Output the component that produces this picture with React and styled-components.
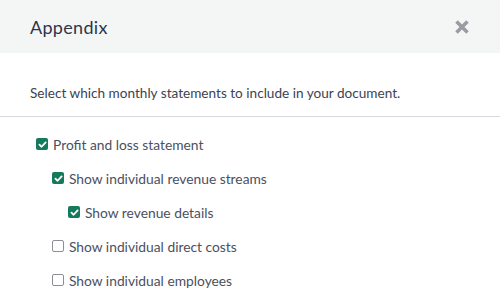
import styled, { createGlobalStyle } from 'styled-components';

const GlobalStyle = createGlobalStyle`
  body {
    margin: 0;
    background: #ffffff;
    font-family: Lato, "Open Sans", sans-serif;
  }
`;

const Dialog = styled.div`
  width: 500px;
  height: 305px;
  overflow: hidden;
  background: #ffffff;
`;

const Header = styled.div`
  height: 53px;
  padding: 0 30px;
  display: flex;
  align-items: center;
  justify-content: space-between;
  background: #f4f6f6;
`;

const Title = styled.h2`
  margin: 0;
  font-size: 18px;
  font-weight: 400;
  color: #2e3647;
  letter-spacing: 0.3px;
`;

const CloseButton = styled.button`
  border: 0;
  padding: 0;
  background: none;
  width: 16px;
  height: 16px;
  display: flex;
  cursor: pointer;
`;

const Intro = styled.p`
  margin: 0;
  padding: 30px 30px 13px;
  line-height: 20px;
  font-size: 13.6px;
  color: #3d4352;
  border-bottom: 1px solid #d6d9dd;
`;

const List = styled.ul`
  list-style: none;
  margin: 0;
  padding: 10px 0 0 36px;
`;

const Row = styled.li`
  height: 34px;
  display: flex;
  align-items: center;
  gap: 5px;
  padding-left: ${(p) => p.$level * 16}px;
  font-size: 13.8px;
  color: #4a5061;
`;

const Box = styled.span`
  box-sizing: border-box;
  flex: none;
  width: 12px;
  height: 12px;
  border-radius: 2px;
  display: flex;
  align-items: center;
  justify-content: center;
  background: ${(p) => (p.$checked ? '#137a5b' : '#ffffff')};
  border: ${(p) => (p.$checked ? 'none' : '1px solid #8c8f95')};
`;

const items = [
  { label: 'Profit and loss statement', level: 0, checked: true },
  { label: 'Show individual revenue streams', level: 1, checked: true },
  { label: 'Show revenue details', level: 2, checked: true },
  { label: 'Show individual direct costs', level: 1, checked: false },
  { label: 'Show individual employees', level: 1, checked: false },
];

function Checkbox({ checked }) {
  return (
    <Box $checked={checked}>
      {checked && (
        <svg width="9" height="9" viewBox="0 0 10 10">
          <path d="M1.6 5.2 L4 7.5 L8.5 2.6" fill="none" stroke="#fff" strokeWidth="2" strokeLinecap="round" strokeLinejoin="round" />
        </svg>
      )}
    </Box>
  );
}

export default function App() {
  return (
    <>
      <GlobalStyle />
      <Dialog>
        <Header>
          <Title>Appendix</Title>
          <CloseButton aria-label="Close">
            <svg width="16" height="16" viewBox="0 0 16 16">
              <path d="M2.5 2.5 L13.5 13.5 M13.5 2.5 L2.5 13.5" stroke="#9a9ca1" strokeWidth="3.6" strokeLinecap="butt" />
            </svg>
          </CloseButton>
        </Header>
        <Intro>Select which monthly statements to include in your document.</Intro>
        <List>
          {items.map((it) => (
            <Row key={it.label} $level={it.level}>
              <Checkbox checked={it.checked} />
              {it.label}
            </Row>
          ))}
        </List>
      </Dialog>
    </>
  );
}
